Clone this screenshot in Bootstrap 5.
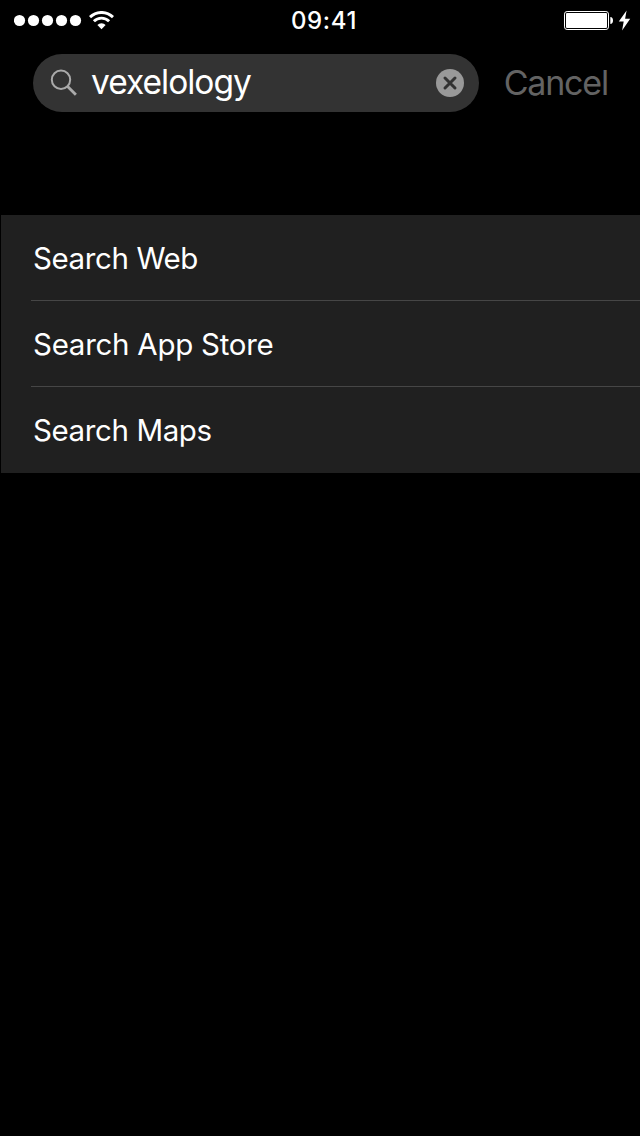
<!DOCTYPE html>
<html lang="en" data-bs-theme="dark">
<head>
<meta charset="utf-8">
<meta name="viewport" content="width=device-width, initial-scale=1">
<title>Search</title>
<link href="https://cdn.jsdelivr.net/npm/bootstrap@5.3.0/dist/css/bootstrap.min.css" rel="stylesheet">
<style>
  body { background: #000; color: #fff; font-family: Inter, "Liberation Sans", sans-serif; overflow: hidden; }
  svg { display: block; flex: none; }
  .status-bar { height: 41px; display: grid; grid-template-columns: 1fr auto 1fr; padding: 0 9px 0 14px; }
  .wifi { margin-left: 7px; }
  .clock { font-size: 24px; font-weight: 500; line-height: 41px; letter-spacing: .6px; padding-left: 3px; }
  .search-row { height: 58px; margin-top: 13px; padding: 0 32px 0 33px; }
  .search-field { width: 446px; height: 58px; padding: 0 15px 0 17px; background: #333; }
  .query { font-size: 33.5px; line-height: 57px; margin-left: 13px; padding-bottom: 1px; letter-spacing: -1px; }
  .cancel { font-size: 34px; line-height: 58px; font-weight: 400; color: #636363; letter-spacing: -1.2px; }
  .results { margin: 103px 0 0 1px; background: #202020; }
  .result { height: 86px; margin-left: 30px; padding: 0 0 0 2px; font-size: 29.5px; letter-spacing: -.4px; background: transparent; border: 0; border-radius: 0; color: #fff; }
  .result.store { letter-spacing: -.27px; }
  .result:not(:last-child) { box-shadow: inset 0 -1px #464646; }
</style>
</head>
<body>
<header class="status-bar align-items-center">
  <div class="d-flex align-items-center">
    <svg width="68" height="13" viewBox="0 0 68 13" fill="#fff"><circle cx="5.5" cy="6.5" r="5.6"/><circle cx="19.5" cy="6.5" r="5.6"/><circle cx="33.5" cy="6.5" r="5.6"/><circle cx="47.5" cy="6.5" r="5.6"/><circle cx="61.5" cy="6.5" r="5.6"/></svg>
    <svg class="wifi" width="25" height="19" viewBox="0 0 25 19" fill="none" stroke="#fff" stroke-width="2.9"><path d="M1 6.1a16.5 16.5 0 0 1 23 0M4.9 10.3a10.8 10.8 0 0 1 15.2 0"/><path d="M12.5 18.2l-4.1-4.3a5.8 5.8 0 0 1 8.2 0z" fill="#fff" stroke="none"/></svg>
  </div>
  <div class="clock">09:41</div>
  <div class="d-flex align-items-center justify-content-end">
    <svg width="50" height="19" viewBox="0 0 50 19"><rect x=".5" y=".5" width="44" height="18" rx="2.6" fill="none" stroke="#fff"/><rect x="2" y="2" width="41" height="15" rx="1" fill="#fff"/><path d="M46.3 6q2.7.2 2.7 3.5t-2.7 3.5z" fill="#fff"/></svg>
    <svg class="ms-1" width="13" height="21" viewBox="0 0 13 21"><path d="M8.6.5L.8 11.6h4.9L4.1 20.5 12.2 8.8H7.1z" fill="#fff"/></svg>
  </div>
</header>
<main>
  <div class="search-row d-flex align-items-center justify-content-between">
    <div class="search-field d-flex align-items-center rounded-pill">
      <svg width="28" height="28" viewBox="0 0 28 28" fill="none" stroke="#aaa"><circle cx="11" cy="10.7" r="9.2" stroke-width="2"/><path d="M17.4 17.2l8.5 8.5" stroke-width="2.8"/></svg>
      <span class="query">vexelology</span>
      <svg class="ms-auto" width="28" height="28" viewBox="0 0 28 28"><circle cx="14" cy="14" r="14" fill="#999"/><path d="M9 9l10 10m0-10L9 19" stroke="#333" stroke-width="3" stroke-linecap="round"/></svg>
    </div>
    <div class="cancel" role="button">Cancel</div>
  </div>
  <div class="results list-group rounded-0">
    <div class="result list-group-item d-flex align-items-center">Search Web</div>
    <div class="result store list-group-item d-flex align-items-center">Search App Store</div>
    <div class="result list-group-item d-flex align-items-center">Search Maps</div>
  </div>
</main>
<script src="https://cdn.jsdelivr.net/npm/bootstrap@5.3.0/dist/js/bootstrap.bundle.min.js"></script>
</body>
</html>
